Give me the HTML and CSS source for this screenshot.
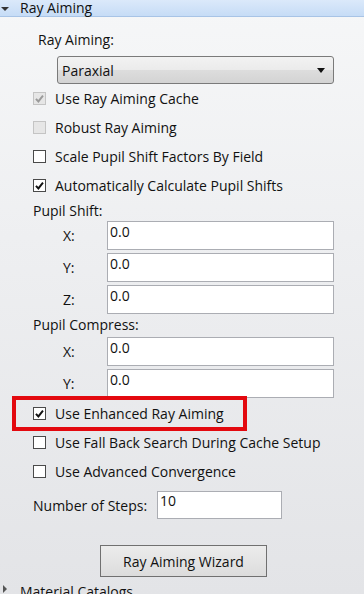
FILE: index.html
```html
<!DOCTYPE html>
<html>
<head>
<meta charset="utf-8">
<link rel="stylesheet" href="styles.css">
</head>
<body>
<div class="panel">
  <div class="section-head">
    <span class="tri-down"></span>
    <span class="section-title">Ray Aiming</span>
  </div>
  <div class="body">
    <div class="label-row indent-38">Ray Aiming:</div>
    <div class="select">
      <span>Paraxial</span>
      <span class="arrow"></span>
    </div>
    <div class="check-row">
      <span class="box disabled"><svg viewBox="0 0 13 13" class="tick grey"><path d="M2.3 6.3 L5.2 9.4 L10.6 2.6" /></svg></span>
      <span>Use Ray Aiming Cache</span>
    </div>
    <div class="check-row">
      <span class="box disabled"></span>
      <span>Robust Ray Aiming</span>
    </div>
    <div class="check-row">
      <span class="box"></span>
      <span>Scale Pupil Shift Factors By Field</span>
    </div>
    <div class="check-row">
      <span class="box"><svg viewBox="0 0 13 13" class="tick"><path d="M2.3 6.3 L5.2 9.4 L10.6 2.6" /></svg></span>
      <span>Automatically Calculate Pupil Shifts</span>
    </div>
    <div class="label-row group-label">Pupil Shift:</div>
    <div class="field-list">
      <div class="field-row"><span class="axis">X:</span><div class="input">0.0</div></div>
      <div class="field-row"><span class="axis">Y:</span><div class="input">0.0</div></div>
      <div class="field-row"><span class="axis">Z:</span><div class="input">0.0</div></div>
    </div>
    <div class="label-row group-label compress">Pupil Compress:</div>
    <div class="field-list">
      <div class="field-row"><span class="axis">X:</span><div class="input">0.0</div></div>
      <div class="field-row"><span class="axis">Y:</span><div class="input">0.0</div></div>
    </div>
    <div class="check-row highlighted">
      <span class="box"><svg viewBox="0 0 13 13" class="tick"><path d="M2.3 6.3 L5.2 9.4 L10.6 2.6" /></svg></span>
      <span>Use Enhanced Ray Aiming</span>
    </div>
    <div class="check-row">
      <span class="box"></span>
      <span>Use Fall Back Search During Cache Setup</span>
    </div>
    <div class="check-row">
      <span class="box"></span>
      <span>Use Advanced Convergence</span>
    </div>
    <div class="steps-row">
      <span class="steps-label">Number of Steps:</span>
      <div class="input steps">10</div>
    </div>
    <div class="button-row">
      <div class="button">Ray Aiming Wizard</div>
    </div>
  </div>
  <div class="collapsed-head">
    <span class="tri-right"></span>
    <span class="section-title">Material Catalogs</span>
  </div>
</div>
</body>
</html>
```
FILE: styles.css
```css
html, body {
  margin: 0;
  padding: 0;
}
body {
  width: 364px;
  height: 594px;
  overflow: hidden;
  font-family: "Open Sans", "Noto Sans", sans-serif;
  font-size: 14px;
  color: #111;
  background: linear-gradient(to bottom, #f6f7f8 0%, #eeeff1 40%, #e3e4e7 100%);
}
.panel {
  display: flex;
  flex-direction: column;
}
.section-head {
  height: 17px;
  box-sizing: border-box;
  border-bottom: 1px solid #a8c4e6;
  background: linear-gradient(to bottom, #dbe9fa, #c6dcf6);
  display: flex;
  align-items: center;
}
.tri-down {
  width: 0;
  height: 0;
  border-left: 4px solid transparent;
  border-right: 4px solid transparent;
  border-top: 4px solid #333;
  margin-left: 1px;
  margin-top: 1px;
}
.section-title {
  margin-left: 11px;
  line-height: 15px;
  margin-top: -2px;
}
.body {
  display: flex;
  flex-direction: column;
}
.label-row {
  height: 20px;
  line-height: 20px;
}
.indent-38 {
  margin-top: 13px;
  padding-left: 38px;
}
.select {
  margin-top: 6px;
  margin-left: 57px;
  width: 277px;
  height: 28px;
  box-sizing: border-box;
  border: 1px solid #7a7a7a;
  border-radius: 3px;
  background: linear-gradient(to bottom, #f2f2f2 0%, #ebebeb 50%, #dddddd 51%, #d3d3d3 100%);
  display: flex;
  align-items: center;
  justify-content: space-between;
  padding: 0 8px 0 4px;
}
.arrow {
  width: 0;
  height: 0;
  border-left: 4px solid transparent;
  border-right: 4px solid transparent;
  border-top: 5px solid #111;
}
.check-row {
  height: 29px;
  display: flex;
  align-items: center;
  padding-left: 33px;
}
.box {
  width: 13px;
  height: 13px;
  box-sizing: border-box;
  border: 1px solid #4a4a4a;
  background: #fff;
  margin-right: 9px;
  display: flex;
  align-items: center;
  justify-content: center;
  flex: none;
}
.box.disabled {
  border-color: #c4c4c4;
  background: #e6e6e6;
}
.tick {
  width: 12px;
  height: 12px;
}
.tick path {
  fill: none;
  stroke: #111;
  stroke-width: 2.3;
}
.tick.grey path {
  stroke: #9a9a9a;
}
.group-label {
  padding-left: 33px;
  height: 21px;
  line-height: 22px;
}
.group-label.compress {
  height: 23px;
  line-height: 22px;
}
.field-list {
  display: flex;
  flex-direction: column;
  gap: 3px;
}
.field-row {
  display: flex;
  align-items: center;
  height: 29px;
  padding-left: 63px;
}
.axis {
  width: 44px;
}
.input {
  width: 227px;
  height: 29px;
  box-sizing: border-box;
  border: 1px solid #abadb3;
  background: #fff;
  padding-left: 2px;
  line-height: 19px;
}
.highlighted {
  position: relative;
  margin-top: 1px;
}
.highlighted::after {
  content: "";
  position: absolute;
  left: 12px;
  top: -3px;
  width: 235px;
  height: 35px;
  box-sizing: border-box;
  border: 4px solid #e3090f;
}
.steps-row {
  display: flex;
  align-items: center;
  margin-top: 5px;
  padding-left: 33px;
  height: 28px;
}
.steps-label {
  width: 124px;
}
.input.steps {
  width: 125px;
  height: 28px;
  line-height: 18px;
}
.button-row {
  display: flex;
  margin-top: 26px;
  padding-left: 100px;
}
.button {
  width: 167px;
  height: 32px;
  box-sizing: border-box;
  border: 1px solid #707070;
  background: linear-gradient(to bottom, #ececec, #dcdcdc);
  display: flex;
  align-items: center;
  justify-content: center;
}
.collapsed-head {
  display: flex;
  align-items: center;
  margin-top: 3px;
  height: 17px;
}
.tri-right {
  width: 0;
  height: 0;
  border-top: 4px solid transparent;
  border-bottom: 4px solid transparent;
  border-left: 4px solid #555;
  margin-left: 3px;
}
.collapsed-head .section-title {
  margin-left: 13px;
  margin-top: 6px;
}
```
